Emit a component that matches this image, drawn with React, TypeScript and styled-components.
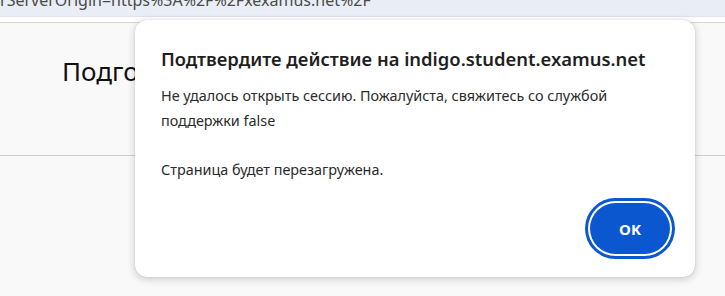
import React from 'react';
import styled, { createGlobalStyle } from 'styled-components';

const GlobalStyle = createGlobalStyle`
  html, body {
    margin: 0;
    padding: 0;
    width: 725px;
    height: 296px;
    overflow: hidden;
    background: #f9f9f9;
    font-family: "Noto Sans", "Open Sans", sans-serif;
  }
`;

const Screen = styled.div`
  position: relative;
  width: 725px;
  height: 296px;
  overflow: hidden;
  background: #f9f9f9;
`;

const AddressStrip = styled.div`
  height: 16px;
  background: #e9eef6;
  border-bottom: 1px solid #dfe4ec;
  overflow: hidden;
  display: flex;
  align-items: flex-end;
`;

const AddressText = styled.span`
  font-size: 16px;
  line-height: 16px;
  color: #4a4a4a;
  white-space: nowrap;
  margin-bottom: 8px;
  margin-left: -9px;
`;

const PageTop = styled.div`
  height: 5px;
  background: #ffffff;
  border-bottom: 1px solid #d6d6d6;
`;

const PageHeader = styled.header`
  height: 133px;
  border-bottom: 1px solid #cfcfcf;
  display: flex;
  align-items: flex-start;
  padding: 30px 0 0 62px;
  box-sizing: border-box;
  background: #f9f9f9;
`;

const PageTitle = styled.h1`
  margin: 0;
  font-size: 26px;
  font-weight: 400;
  color: #111;
  line-height: 36px;
  white-space: nowrap;
`;

const Dialog = styled.div`
  position: absolute;
  left: 135px;
  top: 20px;
  width: 560px;
  height: 257px;
  box-sizing: border-box;
  background: #ffffff;
  border-radius: 12px;
  box-shadow: 0 2px 8px rgba(0, 0, 0, 0.2), 0 0 1px rgba(0, 0, 0, 0.25);
  padding: 26px 25px 23px 26px;
  display: flex;
  flex-direction: column;
`;

const DialogTitle = styled.h2`
  margin: 0;
  font-size: 18.4px;
  font-weight: 600;
  color: #1f1f1f;
  line-height: 26px;
`;

const DialogBody = styled.p`
  margin: 12px 0 0 0;
  font-size: 14.4px;
  line-height: 24.5px;
  color: #2b2b2b;
  white-space: pre-wrap;
`;

const Actions = styled.div`
  margin-top: auto;
  display: flex;
  justify-content: flex-end;
`;

const OkButton = styled.button`
  width: 80px;
  height: 51px;
  border-radius: 26px;
  border: none;
  background: #0b57d0;
  color: #ffffff;
  font-family: "Noto Sans", "Open Sans", sans-serif;
  font-size: 15px;
  font-weight: 700;
  box-shadow: 0 0 0 2px #ffffff, 0 0 0 5px #0b57d0;
  margin: 0;
  cursor: pointer;
`;

export default function App() {
  return (
    <>
      <GlobalStyle />
      <Screen>
        <AddressStrip>
          <AddressText>erServerOrigin=https%3A%2F%2Fxexamus.net%2F</AddressText>
        </AddressStrip>
        <PageTop />
        <PageHeader>
          <PageTitle>Подготовка к экзамену</PageTitle>
        </PageHeader>
        <Dialog role="dialog">
          <DialogTitle>Подтвердите действие на indigo.student.examus.net</DialogTitle>
          <DialogBody>
            {'Не удалось открыть сессию. Пожалуйста, свяжитесь со службой\nподдержки false\n\nСтраница будет перезагружена.'}
          </DialogBody>
          <Actions>
            <OkButton>OK</OkButton>
          </Actions>
        </Dialog>
      </Screen>
    </>
  );
}
